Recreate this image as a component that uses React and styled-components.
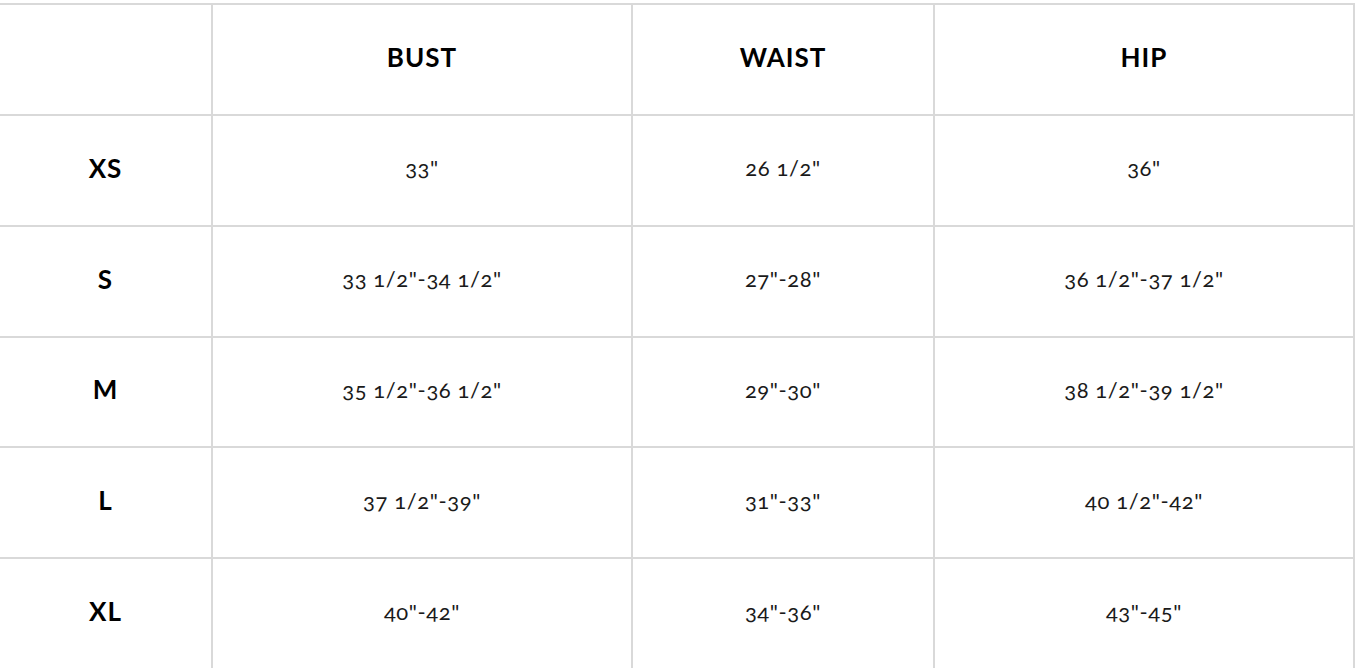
import React from "react";
import styled, { createGlobalStyle } from "styled-components";

const GlobalStyle = createGlobalStyle`
  body {
    margin: 0;
    background: #ffffff;
    font-family: Lato, "Open Sans", sans-serif;
  }
`;

const SizeGrid = styled.div`
  display: grid;
  grid-template-columns: 211px 418px 300px 418px;
  grid-template-rows: 109px;
  grid-auto-rows: 108.8px;
  gap: 2px;
  padding: 2px 2px 0 0;
  margin-top: 3px;
  width: 1355px;
  box-sizing: border-box;
  background-color: #d9d9d9;
`;

const Cell = styled.div`
  display: flex;
  align-items: center;
  justify-content: center;
  padding-bottom: 5px;
  box-sizing: border-box;
  background-color: #ffffff;
  color: ${(p) => (p.$head ? "#000000" : "#1a1a1a")};
  font-size: ${(p) => (p.$head ? "26px" : "22px")};
  font-weight: ${(p) => (p.$head ? 700 : 400)};
  font-variant-numeric: oldstyle-nums;
  letter-spacing: ${(p) => (p.$head ? "1px" : "0.6px")};
`;

const columns = ["BUST", "WAIST", "HIP"];

const rows = [
  ["XS", '33"', '26 1/2"', '36"'],
  ["S", '33 1/2"-34 1/2"', '27"-28"', '36 1/2"-37 1/2"'],
  ["M", '35 1/2"-36 1/2"', '29"-30"', '38 1/2"-39 1/2"'],
  ["L", '37 1/2"-39"', '31"-33"', '40 1/2"-42"'],
  ["XL", '40"-42"', '34"-36"', '43"-45"'],
];

export default () => {
  return (
    <>
      <GlobalStyle />
      <SizeGrid>
        <Cell $head />
        {columns.map((c) => (
          <Cell key={c} $head>
            {c}
          </Cell>
        ))}
        {rows.map(([size, ...values]) => (
          <React.Fragment key={size}>
            <Cell $head>{size}</Cell>
            {values.map((v, i) => (
              <Cell key={i}>{v}</Cell>
            ))}
          </React.Fragment>
        ))}
      </SizeGrid>
    </>
  );
};
